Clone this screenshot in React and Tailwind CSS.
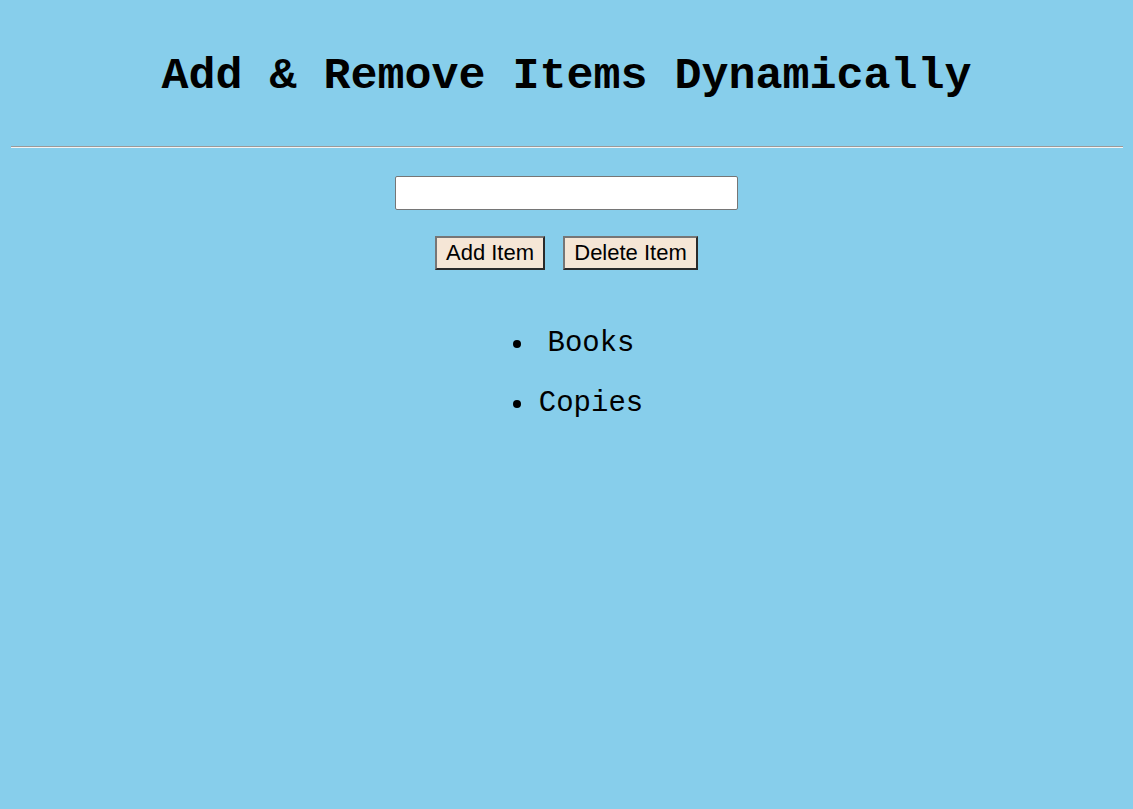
import React, { useState } from 'react';

const App = () => {
  const [items, setItems] = useState(['Books', 'Copies']);
  const [text, setText] = useState('');

  return (
    <div className="min-h-[809px] w-full bg-[#87ceeb] text-black">
      {/* Title */}
      <h1 className="pt-[47px] pb-[39px] text-center text-[45px] font-bold leading-[60px] font-['Liberation_Mono','Courier_New',monospace]">
        Add &amp; Remove Items Dynamically
      </h1>

      <div className="mx-auto h-[2px] w-[1112px] border-t border-b border-t-[#9a9a9a] border-b-[#f4f4f4]" />

      {/* Controls */}
      <div className="mt-[28px] flex flex-col items-center">
        <input
          value={text}
          onChange={(e) => setText(e.target.value)}
          className="h-[34px] w-[343px] rounded-[2px] border border-[#767676] bg-white px-1 outline-none"
        />
        <div className="mt-[26px] flex gap-[18px] font-['Liberation_Sans',Arial,sans-serif] text-[22px]">
          <button
            onClick={() => text && setItems([...items, text])}
            className="h-[34px] w-[110px] border-2 border-t-[#767676] border-l-[#767676] border-b-[#2a2a2a] border-r-[#2a2a2a] bg-[#f5e6d6] leading-none"
          >
            Add Item
          </button>
          <button
            onClick={() => setItems(items.slice(0, -1))}
            className="h-[34px] w-[135px] border-2 border-t-[#767676] border-l-[#767676] border-b-[#2a2a2a] border-r-[#2a2a2a] bg-[#f5e6d6] leading-none"
          >
            Delete Item
          </button>
        </div>
      </div>

      {/* Items */}
      <div className="mt-[44px] flex justify-center">
        <ul className="ml-[36px] text-[29px] font-['Liberation_Mono','Courier_New',monospace]">
          {items.map((item, i) => (
            <li key={i} className="flex items-center gap-[5px] leading-[60px]">
              <span className="h-[8px] w-[8px] rounded-full bg-black" />
              <span className="w-[130px] text-center">{item}</span>
            </li>
          ))}
        </ul>
      </div>
    </div>
  );
};

export default App;
